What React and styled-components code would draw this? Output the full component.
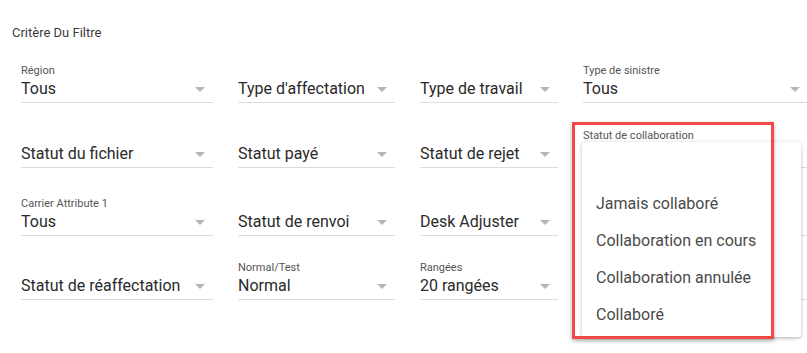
import styled, { createGlobalStyle } from "styled-components";

const GlobalStyle = createGlobalStyle`
    body {
        margin: 0;
        background: #fff;
        font-family: Roboto, "Liberation Sans", Arial, sans-serif;
    }
`;

const fields = [
    { label: "Région", value: "Tous" },
    { value: "Type d'affectation" },
    { value: "Type de travail" },
    { label: "Type de sinistre", value: "Tous" },
    { value: "Statut du fichier" },
    { value: "Statut payé" },
    { value: "Statut de rejet" },
    { label: "Statut de collaboration", value: "", open: true },
    { label: "Carrier Attribute 1", value: "Tous" },
    { value: "Statut de renvoi" },
    { value: "Desk Adjuster" },
    { value: "", hideArrow: true },
    { value: "Statut de réaffectation" },
    { label: "Normal/Test", value: "Normal" },
    { label: "Rangées", value: "20 rangées" },
    { value: "", hideArrow: true },
];

const options = ["", "Jamais collaboré", "Collaboration en cours", "Collaboration annulée", "Collaboré"];

function App() {
    return (
        <>
            <GlobalStyle />
            <Page>
                <Title>Critère Du Filtre</Title>
                <Grid>
                    {fields.map((f, i) => (
                        <Field key={i}>
                            {f.label && <Label>{f.label}</Label>}
                            <ValueRow>
                                <Value>{f.value}</Value>
                                {!f.hideArrow && !f.open && <Arrow />}
                            </ValueRow>
                            {f.open && (
                                <>
                                    <Menu>
                                        {options.map((o, j) => (
                                            <MenuItem key={j}>{o}</MenuItem>
                                        ))}
                                    </Menu>
                                    <Highlight />
                                </>
                            )}
                        </Field>
                    ))}
                </Grid>
            </Page>
        </>
    );
}

const Page = styled.div`
    width: 807px;
    height: 353px;
    overflow: hidden;
    padding: 25px 0 0 12px;
    box-sizing: border-box;
`;

const Title = styled.div`
    font-size: 13px;
    line-height: 16px;
    color: #3a3a3a;
`;

const Grid = styled.div`
    display: grid;
    grid-template-columns: 192px 157px 138px 225px;
    grid-template-rows: 48px 65px 68px 64px;
    column-gap: 25px;
    margin: 14px 0 0 9px;
`;

const Field = styled.div`
    position: relative;
    align-self: end;
    height: 48px;
    display: flex;
    flex-direction: column;
    justify-content: flex-end;
    border-bottom: 1px solid #dcdcdc;
    box-sizing: border-box;
`;

const Label = styled.div`
    font-size: 11px;
    line-height: 13px;
    margin-bottom: 1px;
    color: #555;
    white-space: nowrap;
`;

const ValueRow = styled.div`
    display: flex;
    align-items: center;
    justify-content: space-between;
    height: 22px;
    padding-bottom: 2px;
`;

const Value = styled.div`
    font-size: 16px;
    line-height: 22px;
    color: #2a2a2a;
    white-space: nowrap;
`;

const Arrow = styled.span`
    width: 0;
    height: 0;
    margin-right: 8px;
    border-left: 5px solid transparent;
    border-right: 5px solid transparent;
    border-top: 5px solid #b5b5b5;
`;

const Menu = styled.div`
    position: absolute;
    left: -1px;
    top: 22px;
    width: 219px;
    height: 195px;
    padding: 6px 0 4px;
    box-sizing: border-box;
    background: #fff;
    border-radius: 3px;
    box-shadow: 0 1px 4px rgba(0, 0, 0, 0.22), 0 2px 2px rgba(0, 0, 0, 0.08);
    z-index: 2;
`;

const MenuItem = styled.div`
    height: 37px;
    line-height: 37px;
    padding-left: 14px;
    font-size: 16px;
    color: #4a4a4a;
    white-space: nowrap;
`;

const Highlight = styled.div`
    position: absolute;
    left: -11px;
    top: 2px;
    width: 202px;
    height: 217px;
    border: 3px solid #f24848;
    box-sizing: border-box;
    box-shadow: 0 2px 4px rgba(0, 0, 0, 0.3);
    z-index: 3;
`;

export default App;
